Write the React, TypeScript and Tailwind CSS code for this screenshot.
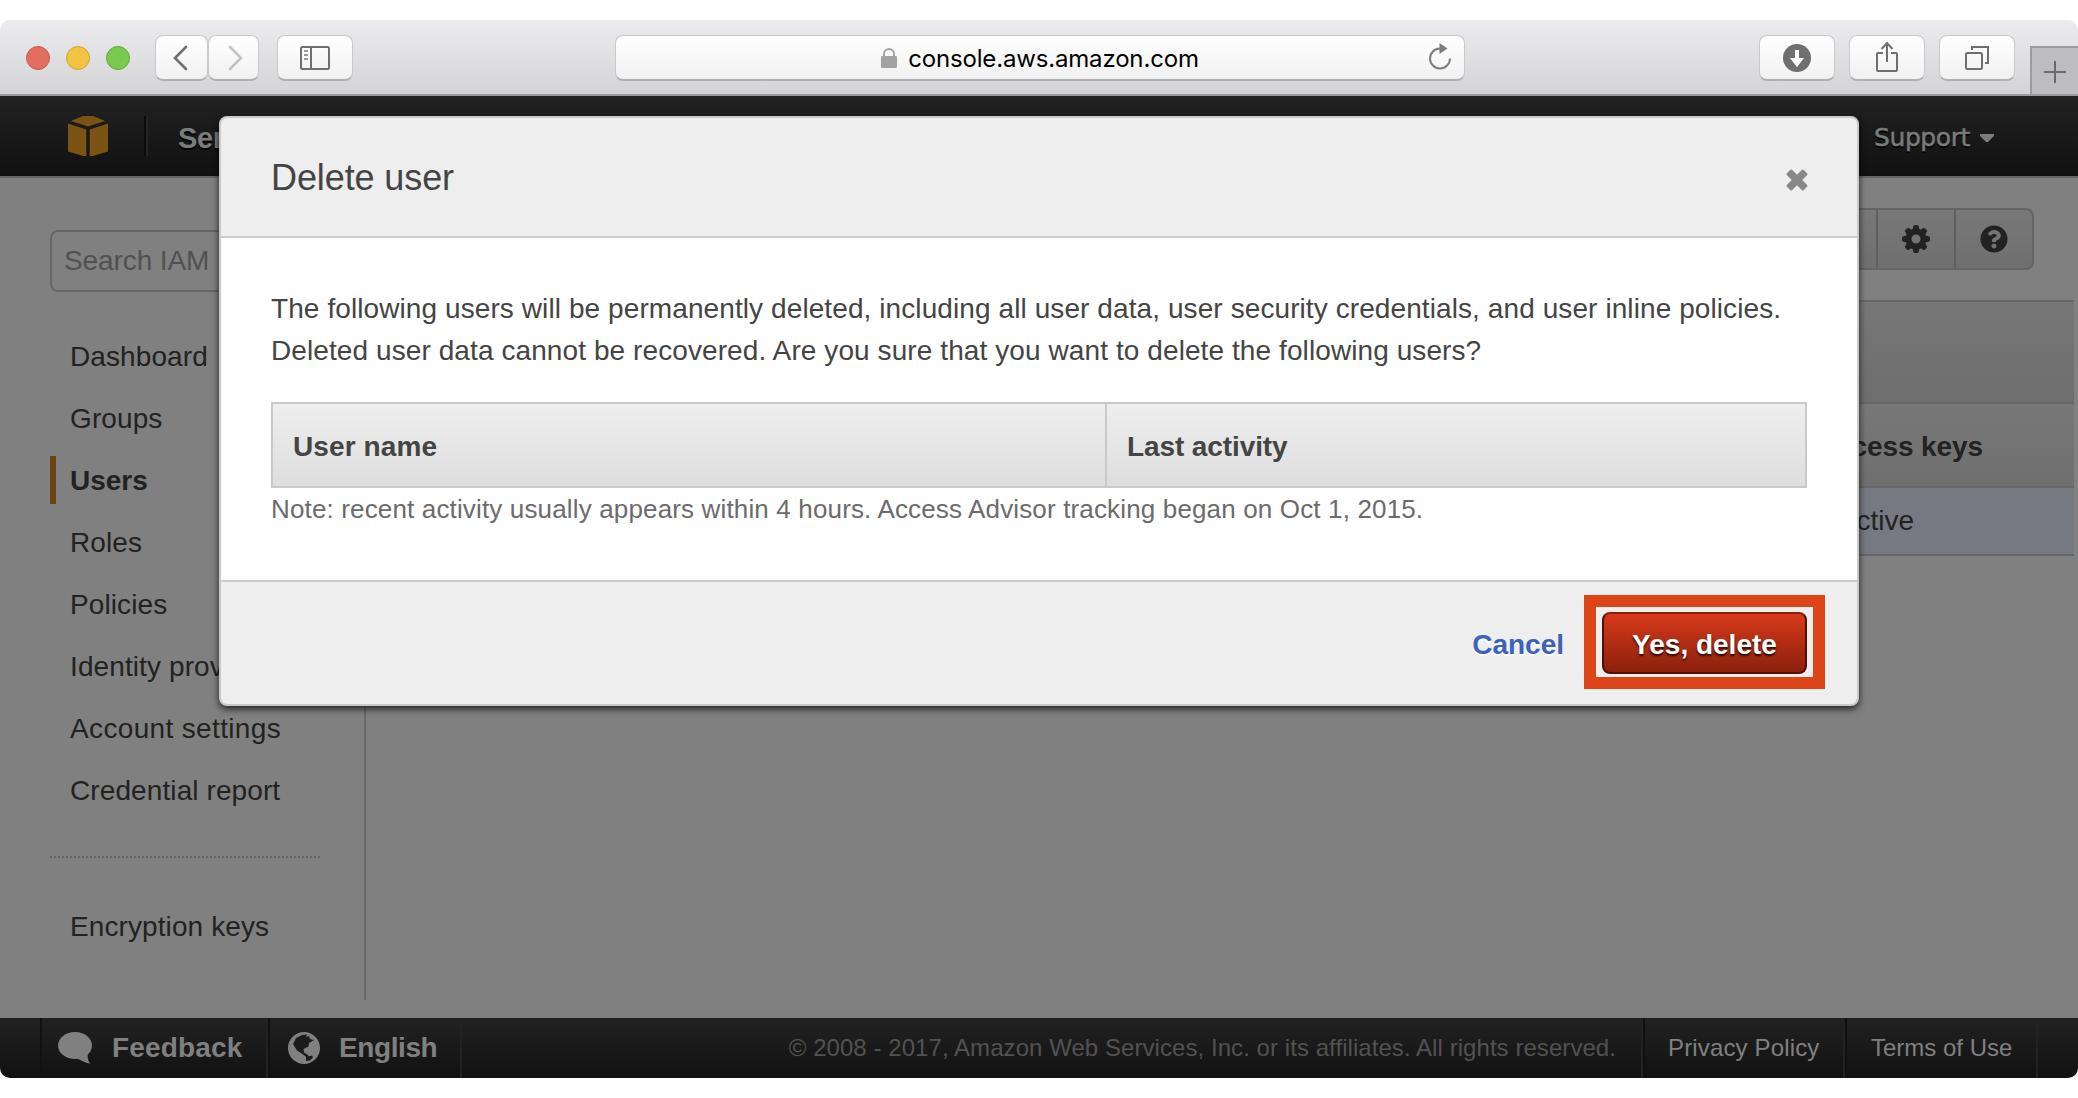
import type { ReactNode } from "react";
import { FaQuestionCircle } from "react-icons/fa";

const navItems = [
  "Dashboard",
  "Groups",
  "Users",
  "Roles",
  "Policies",
  "Identity providers",
  "Account settings",
  "Credential report",
];

function ChromeButton({ className, children }: { className: string; children: ReactNode }) {
  return (
    <div
      className={`flex h-[46px] items-center justify-center rounded-[8px] border border-[#c9c9cb] border-b-2 border-b-[#b0b0b2] bg-linear-to-b from-white to-[#f1f1f1] ${className}`}
    >
      {children}
    </div>
  );
}

function BrowserBar() {
  return (
    <header className="flex h-[76px] shrink-0 items-start rounded-t-[10px] border-b-2 border-[#9b9b9d] bg-linear-to-b from-[#ececee] to-[#d4d4d6]">
      <div className="mt-[26px] ml-[26px] flex gap-4">
        <span className="size-6 rounded-full border border-[#cf5548] bg-[#e26f5e]" />
        <span className="size-6 rounded-full border border-[#d4a32e] bg-[#f0c342]" />
        <span className="size-6 rounded-full border border-[#5fa93c] bg-[#78c94e]" />
      </div>
      <div className="mt-[15px] ml-[25px] flex">
        <ChromeButton className="w-[53px]">
          <svg width="16" height="26" viewBox="0 0 16 26" fill="none" stroke="#6f6f6f" strokeWidth="2.6" strokeLinecap="round" className="-ml-1">
            <path d="M14 2 3 13l11 11" />
          </svg>
        </ChromeButton>
        <ChromeButton className="w-[51px]">
          <svg width="16" height="26" viewBox="0 0 16 26" fill="none" stroke="#c3c3c3" strokeWidth="2.6" strokeLinecap="round" className="ml-1">
            <path d="M2 2l11 11L2 24" />
          </svg>
        </ChromeButton>
      </div>
      <ChromeButton className="mt-[15px] ml-[18px] w-[76px]">
        <svg width="30" height="24" viewBox="0 0 30 24" fill="none" stroke="#6f6f6f" strokeWidth="2">
          <rect x="1" y="1" width="28" height="22" rx="1.5" />
          <path d="M11 1v22" />
          <path d="M4 5h4M4 9h4M4 13h4" stroke="#9a9a9a" />
        </svg>
      </ChromeButton>
      <ChromeButton className="relative mt-[15px] ml-[262px] w-[850px]">
        <svg width="16" height="20" viewBox="0 0 16 20" className="mr-[11px]">
          <path d="M3 9V6a5 5 0 0 1 10 0v3" fill="none" stroke="#a2a2a2" strokeWidth="2" />
          <rect y="8" width="16" height="12" rx="1" fill="#a2a2a2" />
        </svg>
        <span className="pt-[3px] font-[Inter,sans-serif] text-[24px] leading-8 tracking-[-0.17px] text-black">console.aws.amazon.com</span>
        <svg width="24" height="28" viewBox="0 0 24 28" className="absolute top-[7px] right-[12px]">
          <path d="M12 5.5A10 10 0 1 0 22 15.5" fill="none" stroke="#7c7c7c" strokeWidth="2" />
          <path d="M11.500 0v11l8-5.500z" fill="#7c7c7c" />
        </svg>
      </ChromeButton>
      <div className="mt-[15px] ml-auto flex gap-[14px]">
        <ChromeButton className="w-[76px]">
          <svg width="28" height="28" viewBox="0 0 28 28">
            <circle cx="14" cy="14" r="14" fill="#6f6f6f" />
            <path d="M12 6h4v8h5l-7 9-7-9h5z" fill="#fff" />
          </svg>
        </ChromeButton>
        <ChromeButton className="w-[76px]">
          <svg width="24" height="32" viewBox="0 0 24 32" fill="none" stroke="#6f6f6f" strokeWidth="2" className="-mt-0.5">
            <path d="M8 12H3q-1 0-1 1v16q0 1 1 1h18q1 0 1-1V13q0-1-1-1h-5" />
            <path d="M12 21V2M6.500 8 12 2l5.500 6" />
          </svg>
        </ChromeButton>
        <ChromeButton className="w-[76px]">
          <svg width="24" height="24" viewBox="0 0 24 24" fill="none" stroke="#6f6f6f" strokeWidth="2">
            <rect x="1" y="7" width="16" height="16" rx="1.500" />
            <path d="M7 4V1h16v16h-3" />
          </svg>
        </ChromeButton>
      </div>
      <div className="mt-[26px] ml-[15px] flex h-12 w-12 items-center justify-center border-t-2 border-l-2 border-[#9c9c9e] bg-[#bdbdbf]">
        <svg width="22" height="22" viewBox="0 0 22 22" stroke="#6a6a6a" strokeWidth="2" className="mt-0.5">
          <path d="M11 0v22M0 11h22" />
        </svg>
      </div>
    </header>
  );
}

function ConsoleNav() {
  return (
    <nav className="flex h-[82px] shrink-0 items-start border-b-2 border-[#666] bg-linear-to-b from-[#222] to-[#111] pt-5 pr-[84px] pl-[68px] text-[#7b7b7b]">
      <svg width="40" height="40" viewBox="0 0 40 40" fill="#7b5415">
        <path d="M3 5 15 0h10l12 5-17 5.500z" />
        <path d="M0 7.500l18.300 6v26.500h-3L0 35.500z" />
        <path d="M40 7.500l-18.300 6v26.500h3l15.300-4.500z" />
      </svg>
      <div className="ml-9 h-10 w-1 border-r-2 border-l-2 border-r-[#242424] border-l-[#0c0c0c]" />
      <span className="ml-[30px] pt-px text-[29px] leading-[42px] font-bold tracking-[-0.3px] [text-shadow:0_2px_0_#000]">Services</span>
      <span className="ml-auto flex items-center gap-[10px] pt-px font-['DejaVu_Sans',sans-serif] text-[25px] leading-[42px] tracking-[-0.4px] [-webkit-text-stroke:0.5px_#7b7b7b] [text-shadow:0_2px_0_#000]">
        Support
        <svg width="14" height="8" viewBox="0 0 14 8" fill="#7b7b7b">
          <path d="M0 0h14v2L8 8H6L0 2z" />
        </svg>
      </span>
    </nav>
  );
}

function GearIcon() {
  return (
    <svg width="28" height="28" viewBox="0 0 28 28" fill="none">
      <circle cx="14" cy="14" r="7.500" stroke="#222" strokeWidth="6" />
      <g fill="#222">
        {[0, 45, 90, 135, 180, 225, 270, 315].map((angle) => (
          <path key={angle} d="M10.500 5l1-4.500q2.500-1 5 0l1 4.500z" transform={`rotate(${angle} 14 14)`} />
        ))}
      </g>
    </svg>
  );
}

function Sidebar() {
  return (
    <aside className="h-[822px] w-[366px] shrink-0 border-r-2 border-[#6a6a6a] pt-[52px] pl-[50px] text-[28px] text-[#222]">
      <div className="h-[62px] w-[270px] rounded-[8px] border-2 border-[#666] pl-3 leading-[58px] tracking-[-0.1px] text-[#515151]">Search IAM</div>
      <ul className="mt-[33px]">
        {navItems.map((item) => (
          <li key={item} className="flex h-[62px] items-center">
            <span
              className={
                item === "Users"
                  ? "flex h-12 items-center border-l-6 border-[#6b4211] pt-[2px] pl-[14px] font-bold"
                  : "pt-[2px] pl-5 tracking-[0.1px] whitespace-nowrap"
              }
            >
              {item === "Account settings" ? <span className="tracking-[0.35px]">{item}</span> : item}
            </span>
          </li>
        ))}
      </ul>
      <div className="mt-[35px] h-0.5 w-[270px] bg-[repeating-linear-gradient(90deg,#666_0_2px,transparent_2px_4px)]" />
      <div className="mt-[38px] pl-5 leading-[62px] tracking-[0.1px]">Encryption keys</div>
    </aside>
  );
}

function UsersPanel() {
  return (
    <section className="flex flex-1 flex-col pr-1 pl-[42px] text-[28px] text-[#222]">
      <div className="mt-[30px] mr-10 flex h-[62px] self-end rounded-[8px] border-2 border-[#646464] bg-linear-to-b from-[#787878] to-[#6f6f6f]">
        <div className="w-[76px] border-r-2 border-[#5e5e5e]" />
        <div className="flex w-[78px] items-center justify-center border-r-2 border-[#5e5e5e]">
          <GearIcon />
        </div>
        <div className="flex w-[76px] items-center justify-center">
          <FaQuestionCircle size={28} />
        </div>
      </div>
      <div className="mt-[30px] h-[104px] border-t-2 border-b-2 border-[#666] bg-linear-to-b from-[#777] to-[#6e6e6e]" />
      <div className="flex h-[84px] items-center justify-end border-b-2 border-[#666] bg-linear-to-b from-[#787878] to-[#6f6f6f] pt-[3px] pr-[91px] font-bold">
        <span className="tracking-[-0.1px]">Access keys</span>
      </div>
      <div className="flex h-[68px] items-center justify-end border-b-2 border-[#666] bg-[#767982] pr-[160px]">1 active</div>
    </section>
  );
}

function FooterBar() {
  return (
    <footer className="flex h-[60px] shrink-0 rounded-b-[10px] bg-linear-to-b from-[#222] to-[#111] text-[28px] leading-[60px] font-bold text-[#808080]">
      <div className="w-[42px] border-r-2 border-[#111]" />
      <div className="flex w-[226px] items-center border-r-2 border-[#232323] pl-4">
        <svg width="34" height="32" viewBox="0 0 34 32" fill="#808080">
          <ellipse cx="17" cy="13.500" rx="17" ry="13.500" />
          <path d="M17 26c5 1 9 5 15 5.500-2-3-3-6-2-11z" />
        </svg>
        <span className="ml-5 tracking-[0.15px]">Feedback</span>
      </div>
      <div className="flex w-[194px] items-center border-r-2 border-l-2 border-r-[#222] border-l-[#101010] pl-[18px]">
        <svg width="32" height="32" viewBox="0 0 32 32">
          <circle cx="16" cy="16" r="16" fill="#808080" />
          <path d="M5 12 8 6l6-3 5-.500-1 2.500 3-1 1 3 4 1-5 3-.500 3.500-5 2.500.500 3.500 4 2.500 1 2-2 .500L13 21l-4-2.500z" fill="#1c1c1c" />
          <path d="M18 25l6-1.500 1 2-3 3-4 .500z" fill="#1c1c1c" />
        </svg>
        <span className="ml-[19px] tracking-[-0.4px]">English</span>
      </div>
      <div className="ml-auto flex text-[24px] font-normal">
        <span className="mr-[25px] tracking-[0.06px] text-[#525252]">
          © 2008 - 2017, Amazon Web Services, Inc. or its affiliates. All rights reserved.
        </span>
        <div className="w-[202px] border-l-2 border-[#222]">
          <div className="border-l-2 border-[#101010] pl-[23px] tracking-[0.15px]">Privacy Policy</div>
        </div>
        <div className="w-[195px] border-r-2 border-l-2 border-[#222]">
          <div className="border-l-2 border-[#101010] pl-6">Terms of Use</div>
        </div>
        <div className="w-10" />
      </div>
    </footer>
  );
}

function DeleteDialog() {
  return (
    <div className="absolute top-[116px] left-[219px] w-[1640px] rounded-[8px] border-2 border-[#c9c9c9] bg-[#eee] text-[#444] shadow-[0_3px_7px_rgba(0,0,0,0.75)]">
      <div className="flex h-[120px] items-center justify-between border-b-2 border-[#ccc] pr-[49px] pl-[50px]">
        <h2 className="pt-[2px] text-[36px] leading-[44px] tracking-[-0.1px]">Delete user</h2>
        <svg width="22" height="22" viewBox="0 0 22 22" fill="#888" className="mt-[5px]">
          <rect x="-0.900" y="7.300" width="23.800" height="7.400" rx="1.500" transform="rotate(45 11 11)" />
          <rect x="-0.900" y="7.300" width="23.800" height="7.400" rx="1.500" transform="rotate(-45 11 11)" />
        </svg>
      </div>
      <div className="h-[342px] bg-white px-[50px] pt-[50px] text-[28px] leading-[42px]">
        <p className="tracking-[0.09px] whitespace-nowrap">
          The following users will be permanently deleted, including all user data, user security credentials, and user inline policies.
          <br />
          Deleted user data cannot be recovered. Are you sure that you want to delete the following users?
        </p>
        <div className="mt-[30px] grid h-[86px] grid-cols-[834px_1fr] border-2 border-[#c9c9c9] bg-linear-to-b from-[#eee] to-[#dedede] leading-[86px] font-bold">
          <div className="h-[82px] border-r-2 border-[#c9c9c9] pl-5 tracking-[0.1px]">User name</div>
          <div className="h-[82px] pl-5 tracking-[-0.1px]">Last activity</div>
        </div>
        <p className="text-[26px] tracking-[0.15px] text-[#6b6b6b]">
          Note: recent activity usually appears within 4 hours. Access Advisor tracking began on Oct 1, 2015.
        </p>
      </div>
      <div className="flex h-[124px] items-start justify-end border-t-2 border-[#ccc] pt-[30px] pr-[50px] text-[28px] font-bold">
        <span className="mr-[38px] leading-[66px] text-[#3b63b8] [text-shadow:0_2px_0_#fff]">Cancel</span>
        <button className="relative h-[62px] w-[205px] rounded-[8px] border-2 border-[#4f1005] border-t-[#8a1f0c] bg-linear-to-b from-[#d83a1a] to-[#8c200c] pt-px leading-[60px] text-white [text-shadow:0_2px_2px_rgba(0,0,0,0.8)]">
          Yes, delete
          <span className="absolute -top-[19px] -left-5 h-[94px] w-[241px] border-12 border-[#dd4519]" />
        </button>
      </div>
    </div>
  );
}

export default function App() {
  return (
    <div className="relative flex h-[1098px] w-[2078px] flex-col overflow-hidden bg-white py-5 font-['Liberation_Sans',Arial,sans-serif]">
      <BrowserBar />
      <ConsoleNav />
      <main className="flex h-[840px] shrink-0 bg-[#808080]">
        <Sidebar />
        <UsersPanel />
      </main>
      <FooterBar />
      <DeleteDialog />
    </div>
  );
}
